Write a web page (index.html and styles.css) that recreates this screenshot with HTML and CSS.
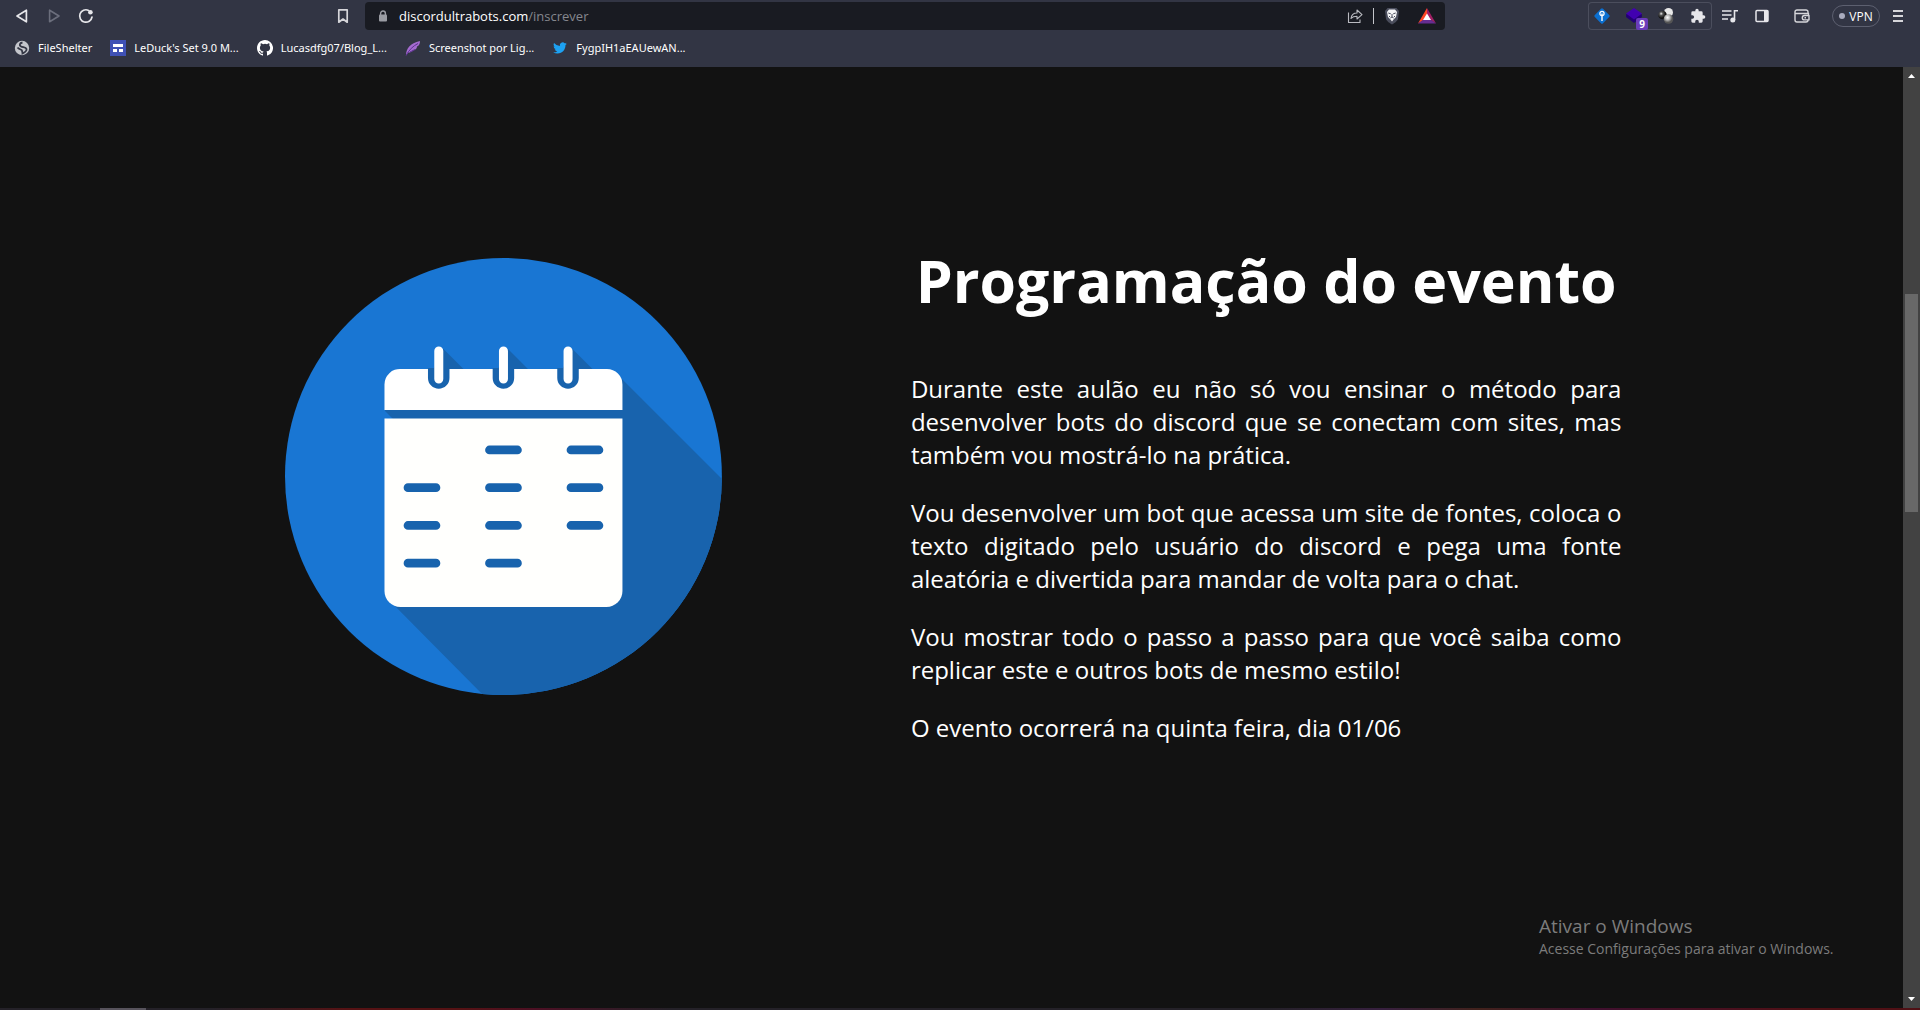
FILE: index.html
```html
<!DOCTYPE html>
<html lang="pt-BR">
<head>
<meta charset="utf-8">
<meta name="viewport" content="width=device-width, initial-scale=1">
<title>Programação do evento</title>
<link rel="stylesheet" href="styles.css">
</head>
<body>
<header class="browser">
  <div class="toolbar">
    <div class="nav">
      <button class="tool" aria-label="Voltar"><svg width="16" height="16" viewBox="0 0 16 16"><path d="M12.4 2.2v11.6L3 8z" fill="none" stroke="#e6e6ea" stroke-width="1.7" stroke-linejoin="round"/></svg></button>
      <button class="tool" aria-label="Avançar"><svg width="16" height="16" viewBox="0 0 16 16"><path d="M3.6 2.2v11.6L13 8z" fill="none" stroke="#6b6e7c" stroke-width="1.6" stroke-linejoin="round"/></svg></button>
      <button class="tool" aria-label="Recarregar"><svg width="16" height="16" viewBox="0 0 16 16"><path d="M10.6 2.4A6.2 6.2 0 1 0 14 9" fill="none" stroke="#e6e6ea" stroke-width="1.7" stroke-linecap="round"/><circle cx="12.4" cy="4.2" r="2.3" fill="#e6e6ea"/></svg></button>
    </div>
    <div class="location">
      <button class="tool" aria-label="Adicionar aos favoritos"><svg width="16" height="16" viewBox="0 0 16 16"><path d="M3.8 1.8h8.4v12.4L8 11l-4.2 3.2z" fill="none" stroke="#d6d6da" stroke-width="1.7" stroke-linejoin="round"/></svg></button>
      <div class="address">
        <svg class="lock" width="10" height="12" viewBox="0 0 10 12"><path d="M2.6 5V3.4a2.4 2.4 0 0 1 4.8 0V5" fill="none" stroke="#9a9ca3" stroke-width="1.4"/><rect x="1" y="4.6" width="8" height="7" rx="1" fill="#9a9ca3"/></svg>
        <span class="url">discordultrabots.com<span class="path">/inscrever</span></span>
        <button class="tool" aria-label="Compartilhar"><svg width="16" height="16" viewBox="0 0 16 16" fill="none" stroke="#b9bac0" stroke-width="1.1" stroke-linejoin="round"><path d="M1.5 4.5v10h11.5v-3"/><path d="M4 10.5C4.5 6.5 6.500 5 10 5V2l5 4.700-5 4.300V8.200C7.500 8.200 5.500 8.700 4 10.500z"/></svg></button>
        <span class="divider"></span>
        <button class="tool shield" aria-label="Brave Shields"><svg width="16" height="18" viewBox="0 0 16 18"><path d="M3.500 1h9L15 4l-1 8c-.5 2-4 4.500-6 5.500C6 16.500 2.500 14 2 12L1 4z" fill="#4a4d5c"/><path d="M5 2.500h6l2 2.500-1 5-2.500 2.500L8 14.500l-1.500-2L4 10 3 5z" fill="#f5f5f7"/><path d="M4.300 6l2.500.8M11.700 6l-2.500.8M8 7v3M6.300 11L8 10l1.700 1M5.500 9v1M10.500 9v1" stroke="#4a4d5c" fill="none"/></svg></button>
        <button class="tool" aria-label="Brave Rewards"><svg width="18" height="16" viewBox="0 0 18 16"><path d="M9 0L0 15.500 9 10z" fill="#ff4724"/><path d="M9 0l9 15.500L9 10z" fill="#9e1f63"/><path d="M0 15.500h18L9 9z" fill="#662d91"/><path d="M9 5.500l4 6.500H5z" fill="#fff"/></svg></button>
      </div>
    </div>
    <div class="actions">
      <div class="extensions">
        <button class="tool" aria-label="Gerenciador de senhas"><svg width="16" height="16" viewBox="0 0 16 16"><rect x="2.200" y="2.200" width="11.600" height="11.600" rx="1.500" transform="rotate(45 8 8)" fill="#0b6fd0"/><circle cx="8" cy="5.500" r="2.100" fill="none" stroke="#fff" stroke-width="1.200"/><path d="M8 5.500v7.500" stroke="#fff" stroke-width="1.400"/></svg></button>
        <button class="tool badged" aria-label="Extensão, 9 avisos"><svg width="16" height="16" viewBox="0 0 16 16"><path d="M0 6.500l8-3 8 3V9l-8 6-8-6z" fill="#230075"/><path d="M8 0l8 5.500-8 6-8-6z" fill="#4100b0"/></svg><span class="badge">9</span></button>
        <button class="tool" aria-label="Extensão"><svg width="16" height="16" viewBox="0 0 16 16"><defs><radialGradient id="dark" cx=".35" cy=".35"><stop offset="0" stop-color="#eee"/><stop offset=".4" stop-color="#555"/><stop offset="1" stop-color="#111"/></radialGradient><radialGradient id="light" cx=".4" cy=".35"><stop offset="0" stop-color="#fff"/><stop offset=".5" stop-color="#bbb"/><stop offset="1" stop-color="#555"/></radialGradient></defs><circle cx="10.500" cy="4.500" r="4.500" fill="#e9e9e9"/><circle cx="4.500" cy="7" r="4.300" fill="url(#dark)"/><circle cx="10.500" cy="11" r="4.800" fill="url(#light)"/></svg></button>
        <button class="tool" aria-label="Extensões"><svg width="16" height="16" viewBox="0 0 24 24"><path fill="#e6e6ea" d="M20.500 11H19V7a2 2 0 0 0-2-2h-4V3.500a2.500 2.500 0 0 0-5 0V5H4a2 2 0 0 0-2 2v3.800h1.500a2.700 2.700 0 0 1 0 5.400H2V20a2 2 0 0 0 2 2h3.800v-1.500a2.700 2.700 0 0 1 5.400 0V22H17a2 2 0 0 0 2-2v-4h1.500a2.500 2.500 0 0 0 0-5z"/></svg></button>
      </div>
      <button class="tool" aria-label="Controle de mídia"><svg width="16" height="16" viewBox="0 0 16 16" fill="none" stroke="#e6e6ea" stroke-width="1.600"><path d="M0 3h9.500M0 7h9.500M0 11h6M12.500 12V2.800H16"/><circle cx="10.800" cy="12" r="1.700" fill="#e6e6ea"/></svg></button>
      <button class="tool" aria-label="Barra lateral"><svg width="14" height="14" viewBox="0 0 14 14"><rect x="1" y="1.500" width="12" height="11" rx="1" fill="none" stroke="#e6e6ea" stroke-width="1.500"/><path d="M9 1.500h4v11H9z" fill="#e6e6ea"/></svg></button>
      <button class="tool wallet" aria-label="Carteira"><svg width="16" height="14" viewBox="0 0 16 14" fill="none" stroke="#d6d6da" stroke-width="1.400" stroke-linejoin="round"><path d="M14 4.500V3a2 2 0 0 0-2-2H3a2 2 0 0 0-2 2v8a2 2 0 0 0 2 2h9a2 2 0 0 0 2-2"/><path d="M1 4.500h13.500v2M15 6.500h-4.500a2.200 2.200 0 0 0 0 4.400H15z"/><path d="M10.500 8.700h1.500"/></svg></button>
      <button class="vpn"><span class="dot"></span>VPN</button>
      <button class="tool menu" aria-label="Menu"><svg width="10" height="12" viewBox="0 0 10 12"><path d="M0 1h10M0 6h10M0 11h10" stroke="#d6d6da" stroke-width="2"/></svg></button>
    </div>
  </div>
  <nav class="bookmarks" aria-label="Favoritos">
    <a href="#"><svg width="16" height="16" viewBox="0 0 16 16"><circle cx="8" cy="8" r="7.200" fill="#c4c6cc"/><path d="M8.500 2.500C5.500 3 5 5.500 7 6.500s5 .5 5.500 2.500-2 3.500-4 4.500c0-1.500-.5-2-.5-3S5 9.500 3.500 7.500" fill="none" stroke="#343745" stroke-width="1.800"/></svg>FileShelter</a>
    <a href="#"><svg width="16" height="16" viewBox="0 0 16 16"><path d="M0 0h16v16H0z" fill="#3f51b5"/><path d="M3 4h10v3H3zM3 9h4v3H3zM9 9h4v3H9z" fill="#fff"/></svg>LeDuck's Set 9.0 M...</a>
    <a href="#"><svg width="16" height="16" viewBox="0 0 16 16"><path fill="#fff" d="M8 0C3.580 0 0 3.580 0 8c0 3.540 2.290 6.530 5.470 7.590.4.070.55-.17.55-.38 0-.19-.01-.82-.01-1.490-2.010.37-2.530-.49-2.690-.94-.09-.23-.48-.94-.82-1.130-.28-.15-.68-.52-.01-.53.63-.01 1.080.58 1.230.82.72 1.210 1.870.87 2.330.66.07-.52.28-.87.51-1.070-1.780-.2-3.640-.89-3.640-3.950 0-.87.31-1.590.82-2.150-.08-.2-.36-1.020.08-2.120 0 0 .67-.21 2.200.82a7.600 7.600 0 0 1 4 0c1.530-1.040 2.200-.82 2.200-.82.44 1.100.16 1.920.08 2.120.51.56.82 1.270.82 2.150 0 3.070-1.870 3.750-3.650 3.950.29.25.54.73.54 1.480 0 1.070-.01 1.930-.01 2.200 0 .21.15.46.55.38A8 8 0 0 0 8 0z"/></svg>Lucasdfg07/Blog_L...</a>
    <a href="#"><svg width="16" height="16" viewBox="0 0 16 16"><path d="M1 15.500C1 9 5 3 15 1c0 3-1 4.500-3 5.500 0 2-1.500 3.500-4 4-1 1.500-3 2-4.500 2z" fill="#a56bd0"/><path d="M1 15.500C4 10 8 6 13 3.500M5 12l5-2.500" stroke="#5b3290" fill="none"/></svg>Screenshot por Lig...</a>
    <a href="#"><svg width="16" height="16" viewBox="-2 -2 28 28"><path fill="#1da1f2" d="M23.950 4.570a10 10 0 0 1-2.820.78 4.960 4.960 0 0 0 2.160-2.730 9.900 9.900 0 0 1-3.130 1.200 4.920 4.920 0 0 0-8.380 4.480A13.900 13.900 0 0 1 1.640 3.160a4.920 4.920 0 0 0 1.520 6.570 4.900 4.900 0 0 1-2.230-.61v.06a4.920 4.920 0 0 0 3.950 4.830 5 5 0 0 1-2.210.08 4.930 4.930 0 0 0 4.600 3.420A9.870 9.870 0 0 1 0 19.540a13.900 13.900 0 0 0 7.550 2.210c9.050 0 14-7.500 14-13.980l-.02-.64a10 10 0 0 0 2.420-2.560z"/></svg>FygpIH1aEAUewAN...</a>
  </nav>
</header>
<div class="viewport">
  <main class="page">
    <section class="event">
      <svg class="calendar" viewBox="0 0 437 437" role="img" aria-label="Calendário">
        <defs><clipPath id="disc"><circle cx="218.500" cy="218.500" r="218.500"/></clipPath></defs>
        <g clip-path="url(#disc)">
          <path d="M0 0h437v437H0z" fill="#1976d3"/>
          <path d="M333 117l200 200v220H297L105 343l-5-186V152l10 0 222-22zM158.500 91l20 20h-30zM223 91l20 20h-30zM287.500 91l20 20h-30z" fill="#1863ad"/>
          <path d="M99 152v9h9z" fill="#1976d3"/>
        </g>
        <path d="M116 111H322a15.500 15.500 0 0 1 15.500 15.500V152H99.500V126.500A15.500 15.500 0 0 1 116 111z" fill="#fff"/>
        <path d="M99.500 160.500h238V333a16 16 0 0 1-16 16h-206a16 16 0 0 1-16-16z" fill="#fffffd"/>
        <g fill="#1863ad"><path d="M143 110h21.500v10a10.700 10.700 0 0 1-21.500 0zM207.700 110h21.500v10a10.700 10.700 0 0 1-21.500 0zM272.300 110h21.500v10a10.700 10.700 0 0 1-21.500 0z"/></g>
        <path d="M153.800 93v28M218.500 93v28M283.100 93v28" stroke="#fff" stroke-width="9" stroke-linecap="round"/>
        <path d="M204.500 192h28M286 192h28M123 229.700h28M204.500 229.700h28M286 229.700h28M123 267.500h28M204.500 267.500h28M286 267.500h28M123 305.200h28M204.500 305.200h28" stroke="#1863ad" stroke-width="8.700" stroke-linecap="round"/>
      </svg>
      <div class="details">
        <h1>Programação do evento</h1>
        <p>Durante este aulão eu não só vou ensinar o método para desenvolver bots do discord que se conectam com sites, mas também vou mostrá-lo na prática.</p>
        <p>Vou desenvolver um bot que acessa um site de fontes, coloca o texto digitado pelo usuário do discord e pega uma fonte aleatória e divertida para mandar de volta para o chat.</p>
        <p>Vou mostrar todo o passo a passo para que você saiba como replicar este e outros bots de mesmo estilo!</p>
        <p>O evento ocorrerá na quinta feira, dia 01/06</p>
      </div>
    </section>
  </main>
  <div class="scrollbar">
    <svg width="17" height="17" viewBox="0 0 17 17"><path d="M5 11l3.500-4 3.500 4z" fill="#fff"/></svg>
    <div class="track"><div class="thumb"></div></div>
    <svg width="17" height="17" viewBox="0 0 17 17"><path d="M5 6l3.500 4L12 6z" fill="#fff"/></svg>
  </div>
</div>
<aside class="watermark"><strong>Ativar o Windows</strong><span>Acesse Configurações para ativar o Windows.</span></aside>
<div class="taskbar"><span></span></div>
</body>
</html>
```
FILE: styles.css
```css
* { box-sizing: border-box; }

body {
  margin: 0;
  height: 100vh;
  display: flex;
  flex-direction: column;
  overflow: hidden;
  background: #121212;
  color: #fff;
  font-family: "Open Sans", "Noto Sans", sans-serif;
}

button {
  padding: 0;
  border: 0;
  background: none;
  color: inherit;
  font: inherit;
}

svg { display: block; flex: none; }

/* Browser frame */
.browser {
  flex: none;
  padding-bottom: 3px;
  background: #323544;
}

.toolbar {
  display: grid;
  grid-template-columns: 327px minmax(0, 1fr) 475px;
  align-items: center;
  height: 32px;
}

.nav, .location, .address, .actions, .extensions, .tool, .vpn {
  display: flex;
  align-items: center;
}

.nav { padding-left: 6px; }

.tool {
  flex: none;
  justify-content: center;
  width: 32px;
  height: 28px;
}

.location { gap: 6px; }

.address {
  flex: 1;
  height: 28px;
  padding: 0 2px 0 13px;
  border-radius: 4px;
  background: #191b22;
}

.lock { margin-right: 11px; }

.url {
  flex: 1;
  font-size: 13px;
  line-height: 20px;
}

.path { color: #85878e; }

.divider {
  width: 1px;
  height: 16px;
  margin: 0 2px;
  background: #c4c5ca;
}

.shield { margin-right: 3px; }

.actions {
  justify-content: flex-end;
  padding-right: 6px;
}

.extensions {
  gap: 4px;
  height: 28px;
  margin-right: 2px;
  border-radius: 4px;
  box-shadow: inset 0 0 0 1px #4b4e5d;
}

.extensions .tool { width: 28px; }

.badged { position: relative; }

.badge {
  position: absolute;
  right: 0;
  bottom: 0;
  width: 12px;
  height: 12px;
  border-radius: 2px;
  background: #6a3cba;
  font-size: 10px;
  font-weight: 700;
  line-height: 12px;
}

.wallet { width: 48px; }

.vpn {
  gap: 4px;
  justify-content: center;
  width: 48px;
  height: 22px;
  margin-left: 6px;
  border: 1px solid #5d6070;
  border-radius: 11px;
  font-size: 12px;
}

.dot {
  width: 6px;
  height: 6px;
  border-radius: 50%;
  background: #a9abbd;
}

.menu {
  width: 34px;
  padding-left: 2px;
}

.bookmarks {
  display: flex;
  align-items: center;
  gap: 18px;
  height: 32px;
  padding-left: 14px;
}

.bookmarks a {
  display: flex;
  align-items: center;
  gap: 8px;
  color: #fff;
  font-family: "Noto Sans", sans-serif;
  font-size: 11px;
  line-height: 16px;
  text-decoration: none;
  white-space: nowrap;
}

/* Page */
.viewport {
  flex: 1;
  min-height: 0;
  display: flex;
}

.page {
  flex: 1;
  min-width: 0;
}

.event {
  display: grid;
  grid-template-columns: 1fr 1fr;
  column-gap: 52px;
  padding: 171px 281px 0 148px;
  padding-inline: 7.8% 14.8%;
}

.calendar {
  width: 61.5%;
  margin: 20px auto 0;
}

.details h1 {
  margin: 0 0 50px;
  font-size: 59px;
  line-height: 84px;
  text-align: center;
  white-space: nowrap;
}

.details p {
  margin: 0 0 25px;
  font-size: 24px;
  line-height: 33px;
  text-align: justify;
}

.scrollbar {
  display: flex;
  flex-direction: column;
  width: 17px;
  background: #424242;
}

.track {
  flex: 1;
  padding: 0 2px;
}

.thumb {
  height: 24%;
  margin-top: 210px;
  background: #686868;
}

/* Desktop layers above the page */
.watermark {
  position: absolute;
  right: 80px;
  bottom: 51px;
  width: 301px;
  display: flex;
  flex-direction: column;
  color: #7c7c7c;
  font-size: 14px;
  line-height: 20px;
  white-space: nowrap;
}

.watermark strong {
  font-size: 19px;
  font-weight: 400;
  line-height: 26px;
}

.taskbar {
  flex: none;
  height: 2px;
  padding-left: 100px;
  background: linear-gradient(90deg, #242128 0 11%, #561214 18% 24%, #4c1024 28%, #242128 35% 66%, #37203f 72%, #42221c 77%, #40102f 83%, #501015 94%);
}

.taskbar span {
  display: block;
  width: 46px;
  height: 2px;
  background: #57535c;
}
```
